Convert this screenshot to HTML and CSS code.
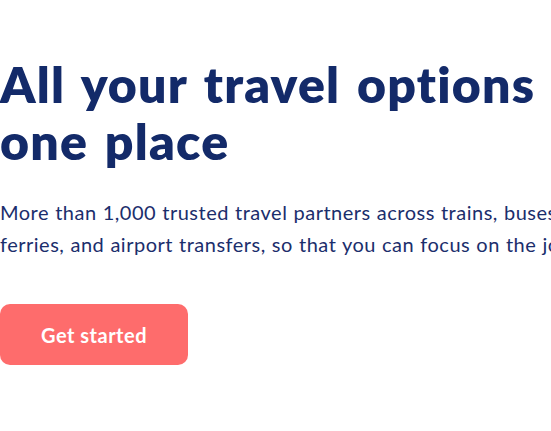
FILE: index.html
```html
<!DOCTYPE html>
<html lang="en">
<head>
<meta charset="utf-8">
<title>Travel options</title>
<link rel="stylesheet" href="styles.css">
</head>
<body>
<main class="hero">
  <h1 class="hero-title">All your travel options in one place</h1>
  <p class="hero-text">More than 1,000 trusted travel partners across trains, buses, flights, ferries, and airport transfers, so that you can focus on the journey.</p>
  <a class="hero-button" href="#">Get started</a>
</main>
</body>
</html>
```

FILE: styles.css
```css
html, body {
  margin: 0;
  padding: 0;
  background: #ffffff;
  overflow: hidden;
}
body {
  width: 551px;
  height: 431px;
  font-family: "Lato", "Noto Sans", sans-serif;
}
.hero {
  display: flex;
  flex-direction: column;
  align-items: flex-start;
  padding-top: 56px;
  width: 720px;
}
.hero-title {
  margin: 0;
  width: 640px;
  font-size: 50px;
  line-height: 57px;
  font-weight: 800;
  color: #132a69;
  letter-spacing: 1.2px;
  word-spacing: 4px;
}
.hero-text {
  margin: 26px 0 0 0;
  width: 660px;
  font-size: 20px;
  line-height: 32px;
  font-weight: 400;
  color: #1b2e6c;
  letter-spacing: 0.5px;
  word-spacing: 0.5px;
}
.hero-button {
  margin-top: 44px;
  width: 188px;
  height: 61px;
  display: flex;
  align-items: center;
  justify-content: center;
  background: #fe6c6c;
  border-radius: 10px;
  color: #ffffff;
  font-size: 20px;
  font-weight: 700;
  letter-spacing: 0.5px;
  text-decoration: none;
}
```
